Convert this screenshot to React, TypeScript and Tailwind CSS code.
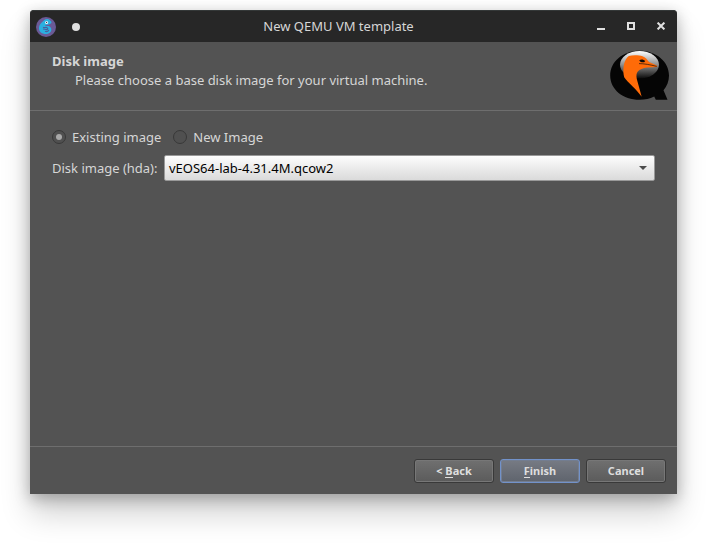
import type { ReactNode } from "react";

function AppIcon() {
  return (
    <svg width="20" height="20" viewBox="0 0 20 20" className="shrink-0">
      <circle cx="10" cy="10" r="10" fill="#6b5a96" />
      <path
        d="M8.300 3C9.800 1.600 13.300 1.800 14.300 3.800c1 .5 1.400 1.300 1 2.200-.7.900-1.800 1.100-2.600 1.500-1.600.7-2.800.2-3.700 1.200 1.500.9 3.200-.2 4.900 1 2.100 1.500 1.900 4.300.1 5.800-2.500 2.200-6.700 2-9 .1C2.400 13.500 2.500 9.500 4.400 7 5.400 5.700 7.100 4.400 8.300 3Z"
        fill="#2bb0e0"
      />
      <path
        d="M7 10.200c1.600.8 2.900-.3 4.100.5 1.300.8.500 2-.6 1.900-1.600-.2-2.200-.9-3.400-.4M9 14.300c1.500.6 3 .2 3.900-1.200"
        fill="none"
        stroke="#4a5f9c"
        strokeWidth="1.100"
      />
      <circle cx="10.600" cy="5.400" r="1.500" fill="#f4f8fa" />
      <circle cx="10.600" cy="5.400" r=".6" fill="#3a2b40" />
    </svg>
  );
}

function QemuLogo() {
  return (
    <svg width="60" height="51" viewBox="0 0 60 51" className="shrink-0">
      <defs>
        <linearGradient id="shine" x1="0" y1="0" x2="0" y2="1">
          <stop offset="0" stopColor="#fff" />
          <stop offset=".5" stopColor="#8e8e8e" />
          <stop offset="1" stopColor="#0a0a0a" />
        </linearGradient>
      </defs>
      <path
        d="M29.500.7C46 .7 59 11.500 59 25.500c0 5.700-2 10.500-5.500 14.700L57.500 49.800H45.800l-1.600-3.200C39.800 48.800 35 49.800 29.500 49.800 13 49.800.2 39.500.2 25.500S13 .7 29.500.7Z"
        fill="#050505"
      />
      <ellipse cx="29.500" cy="14.800" rx="19.500" ry="13.800" fill="url(#shine)" />
      <path
        d="M18.800 6C23 5 29 5.200 32.500 6.300 35.500 7.300 37 9.500 39 12L46.800 15.500C47.600 16 47.400 16.800 46.500 17L37 17.600C33 18.200 29.500 19.500 27.800 21.600C26.300 23.500 26.200 26 26.800 29L31.700 46.800C27 39.500 17.500 32.500 14.200 27.200C13.200 23.500 13 18.500 14 14.200C14.800 10.800 16.500 7.500 18.800 6Z"
        fill="#ff6b08"
      />
      <path d="M29.300 10.200C31 8.900 34 9.500 35.200 11L34.200 12.300C32.200 12.600 30 12 29.300 10.200Z" fill="#080808" />
      <path d="M29 13.600C34 13.600 40 14.700 46.800 16.400" stroke="#34190a" strokeWidth=".8" fill="none" />
    </svg>
  );
}

function Radio({ checked, children }: { checked?: boolean; children: ReactNode }) {
  return (
    <label className="flex items-center gap-1.5">
      <span className="flex size-3.5 items-center justify-center rounded-full border border-[#383838] bg-[#505050]">
        {checked && <span className="size-1.5 rounded-full bg-[#a9a9a9]" />}
      </span>
      <span>{children}</span>
    </label>
  );
}

function Button({ primary, children }: { primary?: boolean; children: ReactNode }) {
  return (
    <button
      className={
        "flex h-6 w-20 items-center justify-center rounded-[3px] border text-[11px] leading-[14px] font-bold text-[#dedede] " +
        (primary
          ? "border-[#7292ca] bg-linear-to-b from-[#777b84] to-[#5f646d] shadow-[inset_0_0_0_1px_#737d90]"
          : "border-[#393939] bg-linear-to-b from-[#707070] to-[#5b5b5b] shadow-[inset_0_0_0_1px_#777777]")
      }
    >
      <span>{children}</span>
    </button>
  );
}

function Mnemonic({ children }: { children: string }) {
  return <span className="inline-block h-[14px] border-b border-[#dedede] leading-[14px]">{children}</span>;
}

export default function App() {
  return (
    <div className="h-[556px] w-[707px] overflow-hidden bg-white px-[30px] pt-[10px] font-['Noto_Sans',sans-serif] text-[13px] leading-[18px] text-[#d6d6d6]">
      <div className="flex h-[484px] w-[647px] flex-col rounded-t-[4px] bg-[#535353] shadow-[0_20px_30px_rgba(0,0,0,0.18),0_4px_15px_rgba(0,0,0,0.28)]">
        <header className="grid h-8 grid-cols-[100px_1fr_100px] items-center rounded-t-[4px] border-t border-[#343838] bg-[#272727] pr-3 pl-1.5">
          <div className="flex items-center gap-4">
            <AppIcon />
            <span className="size-2 rounded-full bg-[#dfdfdf]" />
          </div>
          <h1 className="pr-[24px] pb-px text-center">New QEMU VM template</h1>
          <div className="flex items-center justify-end gap-[22px] pb-px text-[#e0e0e0]">
            <svg width="8" height="8" viewBox="0 0 8 8"><path d="M0 7h8" stroke="currentColor" strokeWidth="2" /></svg>
            <svg width="8" height="8" viewBox="0 0 8 8"><path d="M1 1h6v6H1z" fill="none" stroke="currentColor" strokeWidth="2" /></svg>
            <svg width="8" height="8" viewBox="0 0 8 8"><path d="m.6.600 6.800 6.800m0-6.800L.6 7.400" stroke="currentColor" strokeWidth="2" /></svg>
          </div>
        </header>
        <section className="flex h-[69px] justify-between border-b border-[#6e6e6e] pt-2 pr-[7px] pl-[22px]">
          <div className="pt-[2px]">
            <h2 className="font-bold">Disk image</h2>
            <p className="pt-px pl-[23px]">Please choose a base disk image for your virtual machine.</p>
          </div>
          <QemuLogo />
        </section>
        <main className="flex-1 px-[22px] pt-[17px]">
          <div className="flex gap-3">
            <Radio checked>Existing image</Radio>
            <Radio>New Image</Radio>
          </div>
          <div className="mt-[9px] flex items-center">
            <label className="w-28">Disk image (hda):</label>
            <div className="flex h-[26px] w-[491px] items-center justify-between rounded-[2px] border border-[#999] bg-linear-to-b from-[#fdfdfd] to-[#dadada] pr-[7px] pl-1 text-black">
              <span>vEOS64-lab-4.31.4M.qcow2</span>
              <svg width="8" height="4" viewBox="0 0 8 4"><path d="M0 0h8L4 4Z" fill="#4b4b4b" /></svg>
            </div>
          </div>
        </main>
        <footer className="flex h-12 justify-end gap-1.5 border-t border-[#6e6e6e] pt-3 pr-[11px]">
          <Button>&lt; <Mnemonic>B</Mnemonic>ack</Button>
          <Button primary><Mnemonic>F</Mnemonic>inish</Button>
          <Button>Cancel</Button>
        </footer>
      </div>
    </div>
  );
}
